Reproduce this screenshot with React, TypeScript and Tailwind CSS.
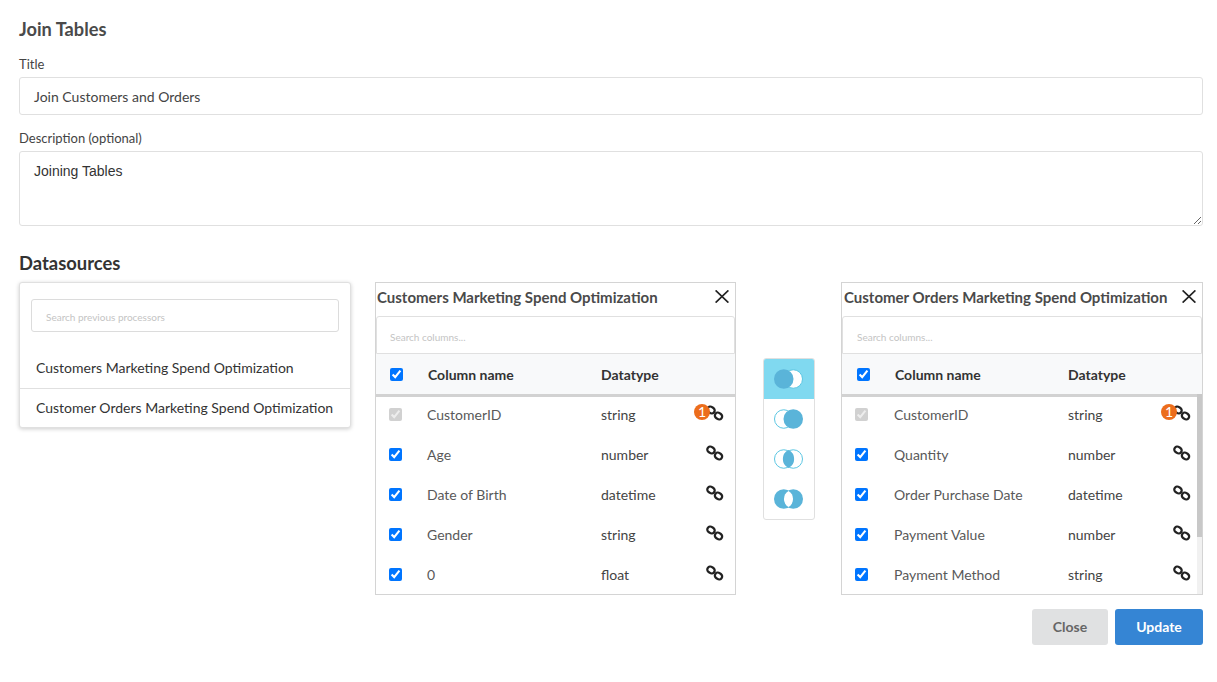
const LATO = "font-['Lato','Noto_Sans',sans-serif]";

type Row = { name: string; type: string; locked?: boolean; badge?: boolean };

const customers: Row[] = [
  { name: "CustomerID", type: "string", locked: true, badge: true },
  { name: "Age", type: "number" },
  { name: "Date of Birth", type: "datetime" },
  { name: "Gender", type: "string" },
  { name: "0", type: "float" },
];

const orders: Row[] = [
  { name: "CustomerID", type: "string", locked: true, badge: true },
  { name: "Quantity", type: "number" },
  { name: "Order Purchase Date", type: "datetime" },
  { name: "Payment Value", type: "number" },
  { name: "Payment Method", type: "string" },
];

const LinkIcon = () => (
  <svg width="18" height="18" viewBox="0 0 18 18" fill="none" stroke="#222" strokeWidth="2.3">
    <rect x="1.2" y="3" width="7.6" height="6" rx="3" transform="rotate(35 5 6)" />
    <rect x="8.7" y="9" width="7.6" height="6" rx="3" transform="rotate(35 12.5 12)" />
  </svg>
);

const CloseIcon = () => (
  <svg width="14" height="13" viewBox="0 0 14 13" stroke="#222" strokeWidth="1.7">
    <path d="M0.6 0.4 13.4 12.6M13.4 0.4 0.6 12.6" />
  </svg>
);

const LENS_WIDE = "M14.5 1A10 10 0 0 1 14.5 19 10 10 0 0 1 14.5 1Z";
const LENS_NARROW = "M14.5 1.9A9.5 9.5 0 0 1 14.5 18.1 9.5 9.5 0 0 1 14.5 1.9Z";

const Venn = ({ type }: { type: "left" | "right" | "inner" | "outer" }) => {
  const fill = "#5ab4d9";
  const line = "#5cc6e2";
  return (
    <svg width="29" height="20" viewBox="0 0 29 20">
      {type === "left" && (
        <>
          <circle cx="19.25" cy="10" r="9.25" fill="#fff" stroke={line} />
          <circle cx="9.75" cy="10" r="9.75" fill={fill} />
        </>
      )}
      {type === "right" && (
        <>
          <circle cx="9.75" cy="10" r="9.25" fill="#fff" stroke={line} />
          <circle cx="19.25" cy="10" r="9.75" fill={fill} />
        </>
      )}
      {type === "inner" && (
        <>
          <circle cx="9.75" cy="10" r="9.25" fill="#fff" stroke={line} />
          <circle cx="19.25" cy="10" r="9.25" fill="none" stroke={line} />
          <path d={LENS_WIDE} fill={fill} />
        </>
      )}
      {type === "outer" && (
        <>
          <circle cx="9.75" cy="10" r="9.75" fill={fill} />
          <circle cx="19.25" cy="10" r="9.75" fill={fill} />
          <path d={LENS_NARROW} fill="#fff" />
        </>
      )}
    </svg>
  );
};

const ColumnsPanel = ({
  title,
  rows,
  width,
  scrollbar,
}: {
  title: string;
  rows: Row[];
  width: string;
  scrollbar?: boolean;
}) => (
  <div className={`${width} h-[313px] shrink-0 border border-[#d4d4d4] flex flex-col overflow-hidden`}>
    <div className={`h-[33px] shrink-0 flex items-center justify-between pb-1 pr-[6px] ${scrollbar ? "pl-[2px]" : "pl-px"}`}>
      <span className="text-[15px] font-bold text-[#4a4a4a] whitespace-nowrap">{title}</span>
      <div className="-mt-[3px] flex">
        <CloseIcon />
      </div>
    </div>
    <div
      className={`h-[38px] shrink-0 border border-[#e0e0e0] rounded-t-[3px] flex items-center pt-[5px] text-[10px] text-[#c4c4c4] bg-white ${
        scrollbar ? "pl-[14px]" : "pl-[13px]"
      }`}
    >
      Search columns...
    </div>
    <div
      className={`h-[43px] shrink-0 bg-[#f8f9fa] border-b-[3px] border-[#d2d2d2] flex items-center text-[14px] font-bold text-[#333] ${
        scrollbar ? "pl-px" : ""
      }`}
    >
      <div className="w-[52px] shrink-0 flex pl-[14px]">
        <input type="checkbox" defaultChecked className="w-[13px] h-[13px]" />
      </div>
      <div className="w-[173px] shrink-0">Column name</div>
      <div>Datatype</div>
    </div>
    <div className="flex flex-1 min-h-0">
      <div className="flex-1 min-w-0">
        {rows.map((row) => (
          <div key={row.name} className="h-10 pb-[6px] flex items-center text-[14px]">
            <div className={`shrink-0 flex pl-[13px] ${scrollbar ? "w-[52px]" : "w-[51px]"}`}>
              {row.locked ? (
                <input type="checkbox" defaultChecked disabled className="w-[13px] h-[13px]" />
              ) : (
                <input type="checkbox" defaultChecked className="w-[13px] h-[13px]" />
              )}
            </div>
            <div className="w-[174px] shrink-0 text-[#595959]">{row.name}</div>
            <div className="flex-1 text-[#444]">{row.type}</div>
            <div className={`relative w-[18px] -mt-[3px] shrink-0 ${scrollbar ? "mr-[6px]" : "mr-[11px]"}`}>
              <LinkIcon />
              {row.badge && (
                <span className="absolute -left-[12px] top-0 w-4 h-4 rounded-full bg-[#ec6d1c] text-white text-[14px] leading-4 text-center">
                  1
                </span>
              )}
            </div>
          </div>
        ))}
      </div>
      {scrollbar && (
        <div className="w-[5px] shrink-0 bg-[#f1f1f1]">
          <div className="-mt-[3px] h-[143px] bg-[#c8c8c8]" />
        </div>
      )}
    </div>
  </div>
);

export default function App() {
  return (
    <div className={`${LATO} w-[1217px] h-[682px] bg-white pl-[19px] pr-[14px] pt-[18px] overflow-hidden`}>
      <h1 className="text-[18.2px] leading-[22px] font-bold text-[#4a4a4a]">Join Tables</h1>

      <label className="block mt-[16px] text-[13px] leading-4 text-[#444]">Title</label>
      <div className="mt-[5px] h-[38px] border border-[#e0e0e0] rounded-[3px] flex items-center pl-[14px] text-[14px] text-[#444]">
        Join Customers and Orders
      </div>

      <label className="block mt-[15px] text-[13px] leading-4 text-[#444]">Description (optional)</label>
      <textarea
        readOnly
        defaultValue="Joining Tables"
        className="block mt-[5px] w-full h-[75px] border border-[#e0e0e0] rounded-[3px] pl-[14px] pt-[10px] text-[14px] leading-[18px] text-[#333] font-['Liberation_Sans',sans-serif] outline-none"
      />

      <h2 className="mt-[26px] text-[18.4px] leading-[22px] font-bold text-[#333]">Datasources</h2>

      <div className="mt-[8px] flex items-start">
        <div className="w-[332px] shrink-0 border border-[#e0e0e0] rounded-[3px] shadow-[0_1px_4px_rgba(0,0,0,0.2)] bg-white">
          <div className="px-[11px] pt-[16px] pb-[16px]">
            <div className="h-[33px] border border-[#dcdcdc] rounded-[3px] flex items-center pt-[3px] pl-[14px] text-[10px] text-[#c4c4c4]">
              Search previous processors
            </div>
          </div>
          <div className="h-[41px] pb-px flex items-center pl-[16px] text-[14px] text-[#333] border-b border-[#e0e0e0]">
            Customers Marketing Spend Optimization
          </div>
          <div className="h-[38px] pb-[2px] flex items-center pl-[16px] text-[14px] text-[#333]">
            Customer Orders Marketing Spend Optimization
          </div>
        </div>

        <div className="ml-[24px]">
          <ColumnsPanel title="Customers Marketing Spend Optimization" rows={customers} width="w-[361px]" />
        </div>

        <div className="ml-[27px] mt-[76px] w-[52px] h-[162px] shrink-0 border border-[#e0e0e0] rounded-[3px] overflow-hidden flex flex-col">
          <div className="h-10 pr-px bg-[#80d9f0] flex items-center justify-center"><Venn type="left" /></div>
          <div className="h-10 pr-px flex items-center justify-center"><Venn type="right" /></div>
          <div className="h-10 pr-px flex items-center justify-center"><Venn type="inner" /></div>
          <div className="h-10 pr-px flex items-center justify-center"><Venn type="outer" /></div>
        </div>

        <div className="ml-[26px]">
          <ColumnsPanel title="Customer Orders Marketing Spend Optimization" rows={orders} width="w-[362px]" scrollbar />
        </div>
      </div>

      <div className="mt-[14px] flex justify-end gap-[7px]">
        <button className="w-[76px] h-9 rounded-[3px] bg-[#e0e1e2] text-[14px] font-bold text-[#666] pb-px">Close</button>
        <button className="w-[88px] h-9 rounded-[3px] bg-[#3585d4] text-[14px] font-bold text-white pb-px">Update</button>
      </div>
    </div>
  );
}
